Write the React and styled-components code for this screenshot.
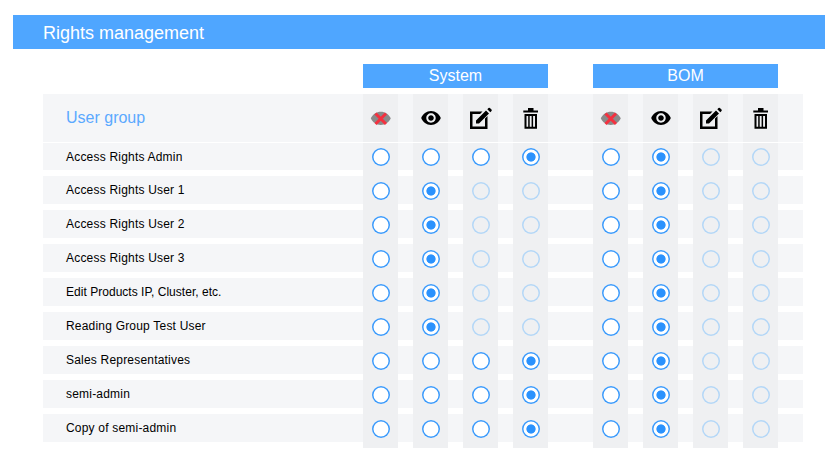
import styled, { createGlobalStyle } from "styled-components";

const GlobalStyle = createGlobalStyle`
  html, body {
    margin: 0;
    padding: 0;
    background: #ffffff;
    font-family: "Liberation Sans", Arial, sans-serif;
  }
`;

const Page = styled.div`
  width: 836px;
  height: 464px;
  box-sizing: border-box;
  padding-top: 15px;
  overflow: hidden;
`;

const Banner = styled.h1`
  margin: 0 11px 0 13px;
  height: 34px;
  padding-left: 30px;
  background-color: #4fa6ff;
  color: #ffffff;
  font-size: 18px;
  font-weight: 400;
  line-height: 36px;
`;

const Table = styled.div`
  width: 760px;
  margin: 15px 0 0 43px;
`;

const SectionRow = styled.div`
  display: grid;
  grid-template-columns: 185px 185px;
  column-gap: 45px;
  padding-left: 320px;
  margin-bottom: 6px;
`;

const SectionTitle = styled.div`
  height: 24px;
  background-color: #4fa6ff;
  color: #ffffff;
  font-size: 16px;
  line-height: 24px;
  text-align: center;
`;

const Row = styled.div`
  display: grid;
  grid-template-columns: 275px 185px 185px;
  column-gap: 45px;
  height: ${(p) => (p.$head ? "49px" : p.$first ? "33px" : "34px")};
  background: linear-gradient(
    #f5f6f8 ${(p) => (p.$head ? "48px" : p.$first ? "27px" : "28px")},
    #ffffff 0
  );
`;

const GroupName = styled.div`
  padding-left: 23px;
  font-size: 12px;
  line-height: 28px;
  letter-spacing: ${(p) => (p.$tight ? "0.03px" : "0.2px")};
  color: #000000;
`;

const HeadLabel = styled.div`
  padding-left: 23px;
  font-size: 16px;
  line-height: 48px;
  color: #5ba9ff;
`;

const Cells = styled.div`
  display: grid;
  grid-template-columns: repeat(4, 35px);
  column-gap: 15px;
`;

const Cell = styled.div`
  display: flex;
  justify-content: center;
  box-sizing: border-box;
  padding-top: ${(p) => (p.$first ? "5px" : "6px")};
  background-color: #eff0f2;
`;

const HeadCell = styled.div`
  display: flex;
  align-items: center;
  justify-content: center;
  height: 48px;
  background-color: #eff0f2;
`;

const Radio = styled.span`
  display: flex;
  align-items: center;
  justify-content: center;
  width: 18px;
  height: 18px;
  border-radius: 50%;
  box-shadow: inset 0 0 0 1.5px ${(p) => (p.$disabled ? "#b4d7f7" : "#3d9bfb")};
  background-color: ${(p) => (p.$disabled ? "transparent" : "#ffffff")};

  &::after {
    content: "";
    display: ${(p) => (p.$checked ? "block" : "none")};
    width: 10px;
    height: 10px;
    background: radial-gradient(closest-side, #2b92fd 84%, transparent 100%);
  }
`;

const HeadIcon = styled.svg`
  display: block;
  width: 24px;
  height: 24px;
`;

const EyeOffIcon = () => (
  <HeadIcon viewBox="0 0 24 24">
    <path
      fill="#8a8a8a"
      d="M11.800 5.700C7.500 5.700 3.600 8.300 1.800 12.300c1.800 4 5.700 6.700 10 6.700s8.200-2.700 10-6.700c-1.800-4-5.700-6.600-10-6.600z"
    />
    <path
      stroke="#f5303f"
      strokeWidth="3"
      fill="none"
      d="M6.500 7.500l10.500 10.500M17 7.500L6.500 18"
    />
  </HeadIcon>
);

const EyeIcon = () => (
  <HeadIcon viewBox="0 0 24 24">
    <path
      fill="#000"
      d="M12 5C7.500 5 3.800 7.900 2.200 12c1.600 4.100 5.300 7 9.800 7s8.200-2.900 9.800-7C20.200 7.900 16.500 5 12 5zm0 11.700c-2.600 0-4.700-2.100-4.700-4.700S9.400 7.300 12 7.300s4.700 2.100 4.700 4.700-2.100 4.700-4.700 4.700zm0-7.500c-1.500 0-2.800 1.300-2.800 2.800s1.300 2.800 2.800 2.800 2.800-1.300 2.800-2.800-1.300-2.800-2.800-2.800z"
    />
  </HeadIcon>
);

const EditIcon = () => (
  <HeadIcon viewBox="0 0 24 24">
    <path fill="#000" d="M1 5.500h12.500L11 8H3.500v12.500H16v-8l2.500-2.500v13H1z" />
    <path
      fill="#000"
      d="M7 17.500v-3l10-10 3 3-10 10zM18.300 3.200l1.200-1.200a1 1 0 0 1 1.400 0l1.600 1.600a1 1 0 0 1 0 1.400l-1.200 1.200z"
    />
  </HeadIcon>
);

const TrashIcon = () => (
  <HeadIcon viewBox="0 0 24 24">
    <path
      fill="#000"
      d="M9 2h5.500v2.500H19v2H4.300v-2H9zM5.500 8H18v14.700H5.500zM7.500 10v10.700h1.700V10zm3.200 0v10.700h1.900V10zm3.400 0v10.700H16V10z"
    />
  </HeadIcon>
);

const headIcons = [EyeOffIcon, EyeIcon, EditIcon, TrashIcon];

// 0 = no access, 1 = read, 2 = write, 3 = delete; read-only groups lock the two higher levels
const groups = [
  { name: "Access Rights Admin", system: 3, bom: 1 },
  { name: "Access Rights User 1", system: 1, bom: 1 },
  { name: "Access Rights User 2", system: 1, bom: 1 },
  { name: "Access Rights User 3", system: 1, bom: 1 },
  { name: "Edit Products IP, Cluster, etc.", system: 1, bom: 1, tight: true },
  { name: "Reading Group Test User", system: 1, bom: 1 },
  { name: "Sales Representatives", system: 3, bom: 1 },
  { name: "semi-admin", system: 3, bom: 1 },
  { name: "Copy of semi-admin", system: 3, bom: 1 },
];

const Level = ({ value, first }) => (
  <Cells>
    {[0, 1, 2, 3].map((i) => (
      <Cell key={i} $first={first}>
        <Radio $checked={value === i} $disabled={value === 1 && i > 1} />
      </Cell>
    ))}
  </Cells>
);

const HeadCells = () => (
  <Cells>
    {headIcons.map((Icon, i) => (
      <HeadCell key={i}>
        <Icon />
      </HeadCell>
    ))}
  </Cells>
);

const App = () => {
  return (
    <Page>
      <GlobalStyle />
      <Banner>Rights management</Banner>
      <Table>
        <SectionRow>
          <SectionTitle>System</SectionTitle>
          <SectionTitle>BOM</SectionTitle>
        </SectionRow>
        <Row $head>
          <HeadLabel>User group</HeadLabel>
          <HeadCells />
          <HeadCells />
        </Row>
        {groups.map((g, i) => (
          <Row key={g.name} $first={i === 0}>
            <GroupName $tight={g.tight}>{g.name}</GroupName>
            <Level value={g.system} first={i === 0} />
            <Level value={g.bom} first={i === 0} />
          </Row>
        ))}
      </Table>
    </Page>
  );
};

export default App;
